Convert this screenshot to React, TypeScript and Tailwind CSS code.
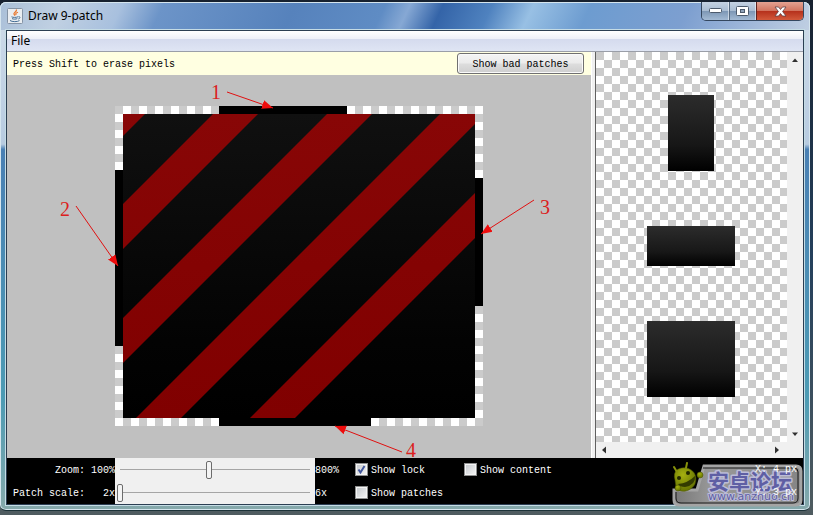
import { useState } from "react";

const CELL = 8;
const COLS = 46;
const ROWS = 40;
const STRIPES = [-23, 90, 204, 317, 431];
const STRIPE_WIDTH = 45;

function Checker({ id, first, second }: { id: string; first: string; second: string }) {
  return (
    <pattern id={id} width={CELL * 2} height={CELL * 2} patternUnits="userSpaceOnUse">
      <rect width={CELL * 2} height={CELL * 2} fill={first} />
      <rect x={CELL} width={CELL} height={CELL} fill={second} />
      <rect y={CELL} width={CELL} height={CELL} fill={second} />
    </pattern>
  );
}

function Note({ label, x, y, from, to }: { label: string; x: number; y: number; from: [number, number]; to: [number, number] }) {
  return (
    <g>
      <line x1={from[0]} y1={from[1]} x2={to[0]} y2={to[1]} stroke="#e01010" markerEnd="url(#arrow)" />
      <text x={x} y={y} fill="#dc2020" fontSize="20" className="font-['Liberation_Serif',serif]">
        {label}
      </text>
    </g>
  );
}

function PatchCanvas() {
  const w = COLS * CELL;
  const h = ROWS * CELL;
  return (
    <svg width={w} height={h} className="shrink-0 overflow-visible" role="img" aria-label="Patch editor">
      <defs>
        <Checker id="edge" first="#cbcbcb" second="#ffffff" />
        <linearGradient id="ink" x1="0" y1="0" x2="0" y2="1">
          <stop offset="0" stopColor="#101010" />
          <stop offset="0.75" stopColor="#030303" />
          <stop offset="1" stopColor="#000000" />
        </linearGradient>
        <linearGradient id="red" gradientUnits="userSpaceOnUse" x1="0" y1="0" x2="0" y2="304">
          <stop offset="0" stopColor="#880606" />
          <stop offset="1" stopColor="#800000" />
        </linearGradient>
        <clipPath id="inner">
          <rect width={w - 16} height={h - 16} />
        </clipPath>
        <marker id="arrow" markerUnits="userSpaceOnUse" markerWidth="12" markerHeight="10" refX="11" refY="5" orient="auto">
          <path d="M0 0.5 L11 5 L0 9.5 Z" fill="#ee0c0c" />
        </marker>
      </defs>
      <rect width={w} height={h} fill="url(#edge)" />
      <rect x="104" y="0" width="128" height="8" />
      <rect x="0" y="64" width="8" height="176" />
      <rect x="360" y="72" width="8" height="128" />
      <rect x="104" y="312" width="152" height="8" />
      <g transform="translate(8 8)" clipPath="url(#inner)">
        <rect width={w - 16} height={h - 16} fill="url(#ink)" />
        {STRIPES.map((c) => (
          <polygon
            key={c}
            fill="url(#red)"
            points={`${c},0 ${c + STRIPE_WIDTH},0 ${c + STRIPE_WIDTH - 304},304 ${c - 304},304`}
          />
        ))}
      </g>
      <Note label="1" x={96} y={-7} from={[112, -14]} to={[158, 2]} />
      <Note label="2" x={-55} y={110} from={[-39, 100]} to={[3, 160]} />
      <Note label="3" x={425} y={108} from={[419, 94]} to={[366, 128]} />
      <Note label="4" x={291} y={351} from={[287, 346]} to={[220, 320]} />
    </svg>
  );
}

function JavaIcon() {
  return (
    <svg width="16" height="16" viewBox="0 0 16 16" fill="none" aria-hidden="true">
      <rect x="0.5" y="0.5" width="15" height="15" rx="1" fill="#e9edf1" stroke="#8493a5" />
      <path d="M9.5 1.5C10 4 6 4.4 7 6.2L8 7.7M11 4.2C8.5 5 8.3 5.8 9.2 7" stroke="#e8762c" strokeWidth="1.2" />
      <path d="M4.5 8.8C6 9.6 9 9.6 11 8.8M5 10.6C6.5 11.3 8.8 11.3 10.3 10.6M11.4 8.7C14 8.4 13 10.8 11.3 11M3 12.5C5 14 10.5 14 12.5 12.6" stroke="#426c94" />
    </svg>
  );
}

const captionButton =
  "flex h-full items-center justify-center border-white/50 bg-[linear-gradient(#c4d2e2_0%,#a9bcd2_48%,#7c96b4_50%,#a3bad4_100%)]";

function TitleBar() {
  return (
    <header className="flex h-7 items-start justify-between">
      <div className="flex items-center gap-[5px] pt-1 pl-px">
        <JavaIcon />
        <h1 className="text-[12px] leading-5 font-normal text-black">Draw 9-patch</h1>
      </div>
      <div className="flex h-[19px] overflow-hidden rounded-b-[5px] border border-t-0 border-[#34475f]">
        <button type="button" aria-label="Minimize" className={`${captionButton} w-[27px] border-r`}>
          <svg width="13" height="6" aria-hidden="true">
            <rect x="0.5" y="0.5" width="12" height="4" rx="1" fill="#fff" stroke="#4c5a6c" />
          </svg>
        </button>
        <button type="button" aria-label="Maximize" className={`${captionButton} w-[27px] border-x border-l-[#56697f]`}>
          <svg width="13" height="11" aria-hidden="true">
            <rect x="0.5" y="0.5" width="12" height="9" rx="1" fill="#fff" stroke="#4c5a6c" />
            <rect x="4.5" y="3.5" width="4" height="3" fill="#8fa3ba" stroke="#4c5a6c" />
          </svg>
        </button>
        <button
          type="button"
          aria-label="Close"
          className="flex h-full w-[47px] items-center justify-center border-l border-[#5c2320] bg-[linear-gradient(#e3a292_0%,#d27560_48%,#b5301b_50%,#d2593b_100%)]"
        >
          <svg width="13" height="11" viewBox="0 0 13 11" aria-hidden="true">
            <path d="M1 1H4.5L6.5 3.5L8.5 1H12L8.6 5.5L12 10H8.5L6.5 7.5L4.5 10H1L4.4 5.5Z" fill="#fff" stroke="#5d4045" strokeWidth="0.8" />
          </svg>
        </button>
      </div>
    </header>
  );
}

function Arrow({ label, d }: { label: string; d: string }) {
  return (
    <button type="button" aria-label={label} className="flex size-4 items-center justify-center">
      <svg width="8" height="8" aria-hidden="true">
        <path d={d} fill="#303030" />
      </svg>
    </button>
  );
}

function Preview() {
  const patch = "bg-[linear-gradient(#2c2c2c,#171717_65%,#000)]";
  return (
    <section aria-label="Preview" className="flex w-[208px] flex-col border-l border-[#606060] bg-[#f0f0f0]">
      <div className="flex flex-1">
        <div className="flex flex-1 flex-col items-center justify-center gap-[55px] bg-[conic-gradient(#fff_25%,#cbcbcb_0_50%,#fff_0_75%,#cbcbcb_0)] bg-[length:16px_16px] pr-px pb-[2px]">
          <div className={`h-[76px] w-[46px] ${patch}`} />
          <div className={`h-10 w-[88px] ${patch}`} />
          <div className={`h-[76px] w-[88px] ${patch}`} />
        </div>
        <div className="flex w-4 flex-col justify-between">
          <Arrow label="Scroll up" d="M1 6L4 2.5L7 6Z" />
          <Arrow label="Scroll down" d="M1 2.5L4 6L7 2.5Z" />
        </div>
      </div>
      <div className="flex h-4 justify-between pr-[18px]">
        <Arrow label="Scroll left" d="M6 0.5L2 4L6 7.5Z" />
        <Arrow label="Scroll right" d="M2 0.5L6 4L2 7.5Z" />
      </div>
    </section>
  );
}

interface ScaleProps {
  id: string;
  label: string;
  low: string;
  high: string;
  initial: number;
}

function Scale({ id, label, low, high, initial }: ScaleProps) {
  const [value, setValue] = useState(initial);
  return (
    <div className="flex h-[23px] items-center">
      <label htmlFor={id} className="w-[72px] pt-0.5 text-right">
        {label}
      </label>
      <span className="w-[30px] pt-0.5 text-right">{low}</span>
      <div className="flex h-full w-[200px] items-center bg-[#f0f0f0] px-[2px]">
        <input
          id={id}
          type="range"
          value={value}
          onChange={(e) => setValue(Number(e.target.value))}
          className="h-5 w-full appearance-none bg-[linear-gradient(#a5a5a5,#a5a5a5)] bg-[length:190px_1px] bg-center bg-no-repeat [&::-webkit-slider-thumb]:h-[18px] [&::-webkit-slider-thumb]:w-[6px] [&::-webkit-slider-thumb]:appearance-none [&::-webkit-slider-thumb]:rounded-[2px] [&::-webkit-slider-thumb]:border [&::-webkit-slider-thumb]:border-[#6c6c6c] [&::-webkit-slider-thumb]:bg-[#f4f4f4]"
        />
      </div>
      <span className="w-10 pt-0.5">{high}</span>
    </div>
  );
}

function Check({ label, on = false }: { label: string; on?: boolean }) {
  const [checked, setChecked] = useState(on);
  return (
    <label className="flex h-[23px] items-center gap-[3px]">
      <span className="grid size-[13px]">
        <input
          type="checkbox"
          checked={checked}
          onChange={(e) => setChecked(e.target.checked)}
          className="col-start-1 row-start-1 size-[13px] appearance-none border border-[#8e8f8f] bg-[linear-gradient(135deg,#c4c8cc,#f6f6f6)] shadow-[inset_0_0_0_1px_#f4f4f4]"
        />
        {checked && (
          <svg viewBox="0 0 13 13" className="pointer-events-none col-start-1 row-start-1" fill="none" aria-hidden="true">
            <path d="M3.5 6.5L5.5 9.5L9.5 3" stroke="#42579c" strokeWidth="2" />
          </svg>
        )}
      </span>
      <span className="pt-0.5">{label}</span>
    </label>
  );
}

function Watermark() {
  return (
    <svg width="132" height="45" className="absolute right-0 bottom-[-3px]" role="img" aria-label="安卓论坛">
      <defs>
        <linearGradient id="plate" x1="0" y1="0" x2="1" y2="0">
          <stop offset="0" stopColor="#777" />
          <stop offset="0.3" stopColor="#999" />
          <stop offset="1" stopColor="#858585" />
        </linearGradient>
        <radialGradient id="droid" cx="0.4" cy="0.3" r="0.8">
          <stop offset="0" stopColor="#a5b010" />
          <stop offset="1" stopColor="#5c6a00" />
        </radialGradient>
      </defs>
      <path d="M33 4H125Q130 4 130 9V38Q130 43 125 43H8Q3 43 3 38V28L26 28Z" fill="url(#plate)" stroke="#a4a4a4" strokeWidth="3" />
      <path d="M32 6H123Q127 6 127 10V36Q127 41 122 41H10Q5 41 5 36V30" fill="none" stroke="#181818" />
      <g fill="url(#droid)" stroke="#4c5500" strokeWidth="0.5">
        <path d="M4 18C1 8 9 5 15 6C22 7 27 13 24 22C20 30 8 32 5 25Z" />
        <circle cx="7" cy="26" r="3" />
        <circle cx="29" cy="13" r="3" />
      </g>
      <path d="M6 10L3 5M15 6L16 1" stroke="#87920a" strokeWidth="2" strokeLinecap="round" />
      <path d="M7 22Q17 21 24 14Q25 23 14 25Q9 25 7 22" fill="#333b00" />
      <circle cx="8" cy="16" r="2" fill="#222800" />
      <circle cx="17" cy="11" r="2" fill="#222800" />
      <g fill="#5f5fa4" stroke="#bcbcd8" strokeWidth="3" paintOrder="stroke" strokeLinejoin="round">
        <text x="37" y="27" fontSize="21" fontWeight="700" className="font-['Noto_Sans_CJK_SC',sans-serif]">
          安卓论坛
        </text>
        <text x="37" y="38" fontSize="11" strokeWidth="2" className="font-['DejaVu_Sans',sans-serif]">
          www.anzhuo.cn
        </text>
      </g>
    </svg>
  );
}

export default function App() {
  return (
    <div className="flex min-h-screen flex-col bg-[linear-gradient(#17212f,#24405c_50%,#4f5c60)] pt-[2px] pr-[3px] pb-1 font-['Noto_Sans',sans-serif] text-[12px] text-black">
      <div className="flex flex-1 flex-col rounded-[6px] border-b border-[#1c3238] bg-[linear-gradient(115deg,#a9bfd8_0%,#c0d0e2_8%,#a8c0de_15%,#6c94c8_20%,#5682bc_36%,#5f8cc4_47%,#86a8d4_50%,#3464a8_54%,#4f82bf_60%,#98c0e4_65%,#6d9cd0_72%,#7d9fd0_84%,#c0cfe2_100%),linear-gradient(#d0dcea,#b7cbe0_28%,#4a80b4_29%,#4c9bb4_78%,#86a9ab)] bg-[length:100%_28px,100%_100%] bg-no-repeat px-[6px] pb-[5px] shadow-[inset_0_0_0_1px_#d5e5ee]">
        <TitleBar />
        <div className="flex flex-1 flex-col border border-[#2b3e52] shadow-[0_0_0_1px_#c5dce5]">
          <nav className="flex h-[21px] items-center border-b border-[#9a9ea8] bg-[linear-gradient(#ffffff_0%,#eef0f8_38%,#d5dbee_42%,#dfe5f4_100%)]">
            <button type="button" className="px-1 leading-5">
              File
            </button>
          </nav>
          <main className="flex flex-1 bg-[#f0f0f0] font-['Liberation_Mono',monospace] text-[10px] leading-3">
            <section aria-label="Editor" className="flex flex-1 flex-col">
              <div className="flex h-[23px] items-center justify-between bg-[#ffffe1] pr-[7px] pl-[6px]">
                <p className="pt-0.5">Press Shift to erase pixels</p>
                <button
                  type="button"
                  className="h-[21px] w-[127px] rounded-[3px] border border-[#707070] bg-[linear-gradient(#f4f4f4_0%,#ebebeb_48%,#dddddd_52%,#cfcfcf_100%)] pt-0.5 shadow-[inset_0_0_0_1px_#fafafa]"
                >
                  Show bad patches
                </button>
              </div>
              <div className="flex flex-1 items-center justify-center bg-[#c0c0c0] pb-px">
                <PatchCanvas />
              </div>
            </section>
            <div className="w-1 border-l border-white bg-[#f0f0f0]" />
            <Preview />
          </main>
          <footer className="relative flex bg-black pl-[6px] font-['Liberation_Mono',monospace] text-[10px] leading-3 text-white">
            <div>
              <Scale id="zoom" label="Zoom:" low="100%" high="800%" initial={47} />
              <Scale id="patch-scale" label="Patch scale:" low="2x" high="6x" initial={0} />
            </div>
            <div className="w-[109px]">
              <Check label="Show lock" on />
              <Check label="Show patches" />
            </div>
            <Check label="Show content" />
            <Watermark />
            <div className="relative ml-auto pr-[6px] text-right leading-[23px]">
              <p>X: 4 px</p>
              <p>Y: 3 px</p>
            </div>
          </footer>
        </div>
      </div>
    </div>
  );
}
